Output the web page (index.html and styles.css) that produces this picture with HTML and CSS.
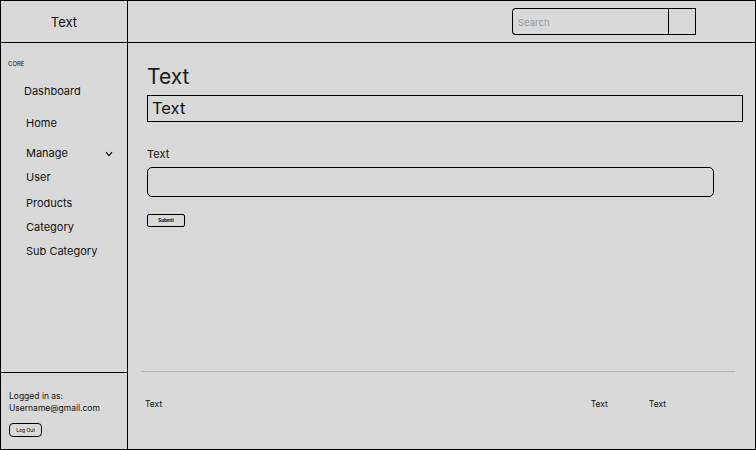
FILE: index.html
```html
<!DOCTYPE html>
<html>
<head>
<meta charset="utf-8">
<link rel="stylesheet" href="styles.css">
</head>
<body>
<div class="frame">
  <header class="topbar">
    <div class="brand">Text</div>
    <div class="topbar-right">
      <div class="search">
        <input class="search-input" type="text" placeholder="Search">
        <button class="search-btn"></button>
      </div>
    </div>
  </header>
  <div class="body">
    <aside class="sidebar">
      <nav class="nav">
        <div class="nav-heading">CORE</div>
        <div class="nav-item dash">Dashboard</div>
        <div class="nav-item home">Home</div>
        <div class="nav-item manage">Manage <span class="chev">
          <svg width="8" height="6" viewBox="0 0 8 6"><path d="M1 1.2 L4 4.6 L7 1.2" fill="none" stroke="#000" stroke-width="1.1"/></svg>
        </span></div>
        <div class="nav-item user">User</div>
        <div class="nav-item prod">Products</div>
        <div class="nav-item cat">Category</div>
        <div class="nav-item sub">Sub Category</div>
      </nav>
      <div class="side-footer">
        <div class="logged">Logged in as:</div>
        <div class="logged">Username@gmail.com</div>
        <button class="logout">Log Out</button>
      </div>
    </aside>
    <main class="main">
      <div class="content">
        <h1 class="title">Text</h1>
        <div class="subtitle">Text</div>
        <label class="label">Text</label>
        <div class="field"></div>
        <button class="submit">Submit</button>
      </div>
      <footer class="footer">
        <div class="footer-line"></div>
        <div class="footer-row">
          <span>Text</span>
          <span class="footer-links"><span>Text</span><span>Text</span></span>
        </div>
      </footer>
    </main>
  </div>
</div>
</body>
</html>
```
FILE: styles.css
```css
* { box-sizing: border-box; }
html, body { margin: 0; padding: 0; }
body {
  background: #d9d9d9;
  font-family: Inter, "Noto Sans", sans-serif;
  color: #111;
}
.frame {
  width: 756px;
  height: 450px;
  border: 1px solid #000;
  display: flex;
  flex-direction: column;
  background: #d9d9d9;
}
.topbar {
  height: 42px;
  border-bottom: 1px solid #000;
  display: flex;
  flex-shrink: 0;
}
.brand {
  width: 127px;
  border-right: 1px solid #000;
  display: flex;
  align-items: center;
  justify-content: center;
  font-size: 13px;
}
.topbar-right {
  flex: 1;
  display: flex;
  justify-content: flex-end;
  align-items: flex-start;
  padding-top: 7px;
  padding-right: 59px;
}
.search {
  display: flex;
  height: 27px;
}
.search-input {
  width: 156px;
  height: 27px;
  border: 1px solid #000;
  border-right: none;
  border-radius: 4px 0 0 4px;
  background: transparent;
  font-family: Inter, sans-serif;
  font-size: 9.5px;
  padding: 2px 0 0 5px;
  outline: none;
}
.search-input::placeholder { color: #9a9a9a; }
.search-btn {
  width: 28px;
  height: 27px;
  border: 1px solid #000;
  background: transparent;
  padding: 0;
}
.body {
  flex: 1;
  display: flex;
  min-height: 0;
}
.sidebar {
  width: 127px;
  border-right: 1px solid #000;
  display: flex;
  flex-direction: column;
  flex-shrink: 0;
}
.nav {
  flex: 1;
  padding-top: 16px;
}
.nav-heading {
  font-size: 6px;
  padding-left: 7px;
  height: 10px;
  line-height: 10px;
}
.nav-item {
  font-size: 11px;
  line-height: 14px;
  padding-left: 25px;
  display: flex;
  align-items: center;
}
.nav-item.dash { padding-left: 23px; margin-top: 15px; }
.nav-item.home { margin-top: 18px; }
.nav-item.manage { margin-top: 16px; padding-right: 14px; justify-content: space-between; }
.nav-item.user { margin-top: 10px; }
.nav-item.prod { margin-top: 12px; }
.nav-item.cat { margin-top: 10px; }
.nav-item.sub { margin-top: 10px; }
.chev { display: flex; align-items: center; padding-top: 2px; }
.side-footer {
  height: 77px;
  border-top: 1px solid #000;
  padding: 17px 0 0 8px;
}
.logged {
  font-size: 8.5px;
  line-height: 12px;
}
.logout {
  margin-top: 9px;
  width: 33px;
  height: 14px;
  border: 1px solid #000;
  border-radius: 4px;
  background: transparent;
  font-family: Inter, sans-serif;
  font-size: 5px;
  padding: 0;
  color: #000;
}
.main {
  flex: 1;
  display: flex;
  flex-direction: column;
}
.content {
  flex: 1;
  padding: 21px 12px 0 19px;
  display: flex;
  flex-direction: column;
  align-items: flex-start;
}
.title {
  margin: 0;
  font-weight: 400;
  font-size: 21px;
  line-height: 26px;
  color: #1a1a1a;
}
.subtitle {
  margin-top: 5px;
  width: 596px;
  height: 27px;
  border: 1.5px solid #000;
  font-size: 16.5px;
  line-height: 24px;
  padding-left: 4px;
}
.label {
  margin-top: 25px;
  font-size: 11px;
  line-height: 14px;
}
.field {
  margin-top: 6px;
  width: 567px;
  height: 30px;
  border: 1.5px solid #000;
  border-radius: 5px;
}
.submit {
  margin-top: 17px;
  width: 38px;
  height: 13px;
  border: 1px solid #000;
  border-radius: 2px;
  background: transparent;
  font-family: Inter, sans-serif;
  font-size: 4.5px;
  font-weight: 700;
  padding: 0;
  color: #000;
}
.footer {
  height: 78px;
  padding: 0 20px 0 13px;
}
.footer-line {
  height: 1px;
  background: #b0b0b0;
}
.footer-row {
  margin-top: 27px;
  display: flex;
  justify-content: space-between;
  font-size: 8.5px;
  line-height: 11px;
  padding-left: 4px;
  padding-right: 69px;
}
.footer-links {
  display: flex;
  gap: 41px;
}
```
